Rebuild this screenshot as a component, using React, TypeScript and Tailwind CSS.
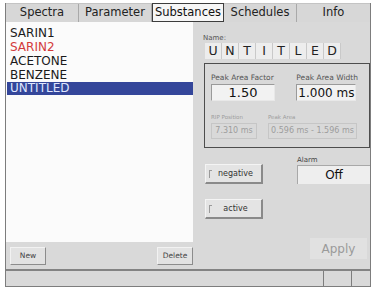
import React from 'react';

const tabs = ['Spectra', 'Parameter', 'Substances', 'Schedules', 'Info'];
const items = [
  { name: 'SARIN1', color: 'text-[#1a1a1a]' },
  { name: 'SARIN2', color: 'text-[#d33a3a]' },
  { name: 'ACETONE', color: 'text-[#1a1a1a]' },
  { name: 'BENZENE', color: 'text-[#1a1a1a]' },
];
const letters = ['U', 'N', 'T', 'I', 'T', 'L', 'E', 'D'];

function Toggle({ label }: { label: string }) {
  return (
    <div className="w-[58px] h-[20px] flex items-center bg-[#e4e4e4] border-t border-l border-[#f4f4f4] border-r-2 border-b-2 border-r-[#8a8a8a] border-b-[#8a8a8a]">
      <span className="ml-[3px] w-[3px] h-[8px] border-l border-t border-[#9a9a9a]" />
      <span className="flex-1 text-center text-[8px] text-[#333] pr-[2px]">{label}</span>
    </div>
  );
}

export default function App() {
  return (
    <div
      className="w-[377px] h-[293px] bg-white overflow-hidden pt-[3px] pl-[5px]"
      style={{ fontFamily: '"DejaVu Sans", "Liberation Sans", sans-serif' }}
    >
      <div className="w-[366px] h-[284px] flex flex-col bg-[#d9d9d9] border-l border-r border-b border-[#7d7d7d]">
        {/* Tab bar */}
        <div className="h-[19px] flex bg-[#d7d7d7] border-t border-[#c4c4c4]">
          {tabs.map((t, i) =>
            t === 'Substances' ? (
              <div
                key={t}
                className="w-[72px] h-[19px] -mt-[1px] flex items-center justify-center bg-[#f6f6f6] border-[1.5px] border-[#3d3d3d] text-[11.5px] text-[#111]"
              >
                {t}
              </div>
            ) : (
              <div
                key={t}
                className={`${i === 4 ? 'flex-1' : 'w-[73px]'} flex items-center justify-center text-[11.5px] text-[#222] ${i < 4 ? 'border-r border-[#a9a9a9]' : ''}`}
              >
                {t}
              </div>
            )
          )}
        </div>

        {/* Content */}
        <div className="flex-1 flex min-h-0">
          {/* Left list column */}
          <div className="w-[187px] flex flex-col">
            <div className="h-[220px] bg-[#fbfbfb] pt-[4px] pl-[1px]">
              {items.map((it) => (
                <div key={it.name} className={`h-[14px] leading-[14px] pl-[3px] text-[12px] ${it.color}`}>
                  {it.name}
                </div>
              ))}
              <div className="h-[13px] leading-[13px] pl-[3px] text-[12px] bg-[#34469a] text-[#dfe6ff]">
                UNTITLED
              </div>
            </div>
            <div className="flex-1 flex items-center justify-between pl-[4px]">
              <div className="w-[36px] h-[18px] flex items-center justify-center text-[7.5px] text-[#444] bg-[#e2e2e2] border-t border-l border-[#f2f2f2] border-r border-b border-r-[#8c8c8c] border-b-[#8c8c8c]">
                New
              </div>
              <div className="w-[36px] h-[18px] flex items-center justify-center text-[7.5px] text-[#444] bg-[#e2e2e2] border-t border-l border-[#f2f2f2] border-r border-b border-r-[#8c8c8c] border-b-[#8c8c8c]">
                Delete
              </div>
            </div>
          </div>

          {/* Right panel */}
          <div className="flex-1 flex flex-col pl-[10px]">
            <div className="mt-[12px] text-[7px] leading-[8px] text-[#555]">Name:</div>
            <div className="mt-[1px] ml-[2px] flex">
              {letters.map((l, i) => (
                <div
                  key={i}
                  className="w-[17px] h-[16px] flex items-center justify-center text-[12.5px] text-[#222] bg-[#ededed] border-r border-[#c9c9c9]"
                >
                  {l}
                </div>
              ))}
            </div>

            {/* Peak group box */}
            <div className="mt-[4px] ml-[1px] h-[85px] border border-[#4d4d4d] flex flex-col px-[6px] pt-[9px]">
              <div className="flex justify-between">
                <div className="flex flex-col">
                  <span className="text-[7.5px] leading-[9px] text-[#555] whitespace-nowrap">Peak Area Factor</span>
                  <div className="mt-[2px] w-[64px] h-[17px] flex items-center justify-center text-[13px] text-[#111] bg-[#f2f2f2] border-t border-l border-[#9a9a9a] border-r border-b border-r-[#e8e8e8] border-b-[#e8e8e8]">
                    1.50
                  </div>
                </div>
                <div className="flex flex-col mr-[5px]">
                  <span className="text-[7.5px] leading-[9px] text-[#555] whitespace-nowrap">Peak Area Width</span>
                  <div className="mt-[2px] w-[60px] h-[17px] flex items-center justify-center text-[12px] text-[#111] whitespace-nowrap bg-[#f2f2f2] border-t border-l border-[#9a9a9a] border-r border-b border-r-[#e8e8e8] border-b-[#e8e8e8]">
                    1.000 ms
                  </div>
                </div>
              </div>
              <div className="flex mt-[13px]">
                <div className="flex flex-col">
                  <span className="text-[5.5px] leading-[7px] text-[#9d9d9d]">RIP Position</span>
                  <div className="mt-[2px] w-[46px] h-[16px] flex items-center justify-center text-[8px] text-[#9d9d9d] border border-[#c6c6c6]">
                    7.310 ms
                  </div>
                </div>
                <div className="flex flex-col ml-[11px]">
                  <span className="text-[5.5px] leading-[7px] text-[#9d9d9d]">Peak Area</span>
                  <div className="mt-[2px] w-[89px] h-[16px] flex items-center justify-center text-[8px] text-[#9d9d9d] whitespace-nowrap border border-[#c6c6c6]">
                    0.596 ms - 1.596 ms
                  </div>
                </div>
              </div>
            </div>

            <div className="flex justify-between mt-[8px]">
              <div className="mt-[8px] ml-[2px]">
                <Toggle label="negative" />
              </div>
              <div className="flex flex-col w-[73px]">
                <span className="text-[7px] leading-[9px] text-[#444]">Alarm</span>
                <div className="h-[19px] flex items-center justify-center text-[12px] font-medium text-[#111] bg-[#eeeeee] border-l border-t border-[#a8a8a8]">
                  Off
                </div>
              </div>
            </div>

            <div className="mt-[15px] ml-[2px]">
              <Toggle label="active" />
            </div>

            <div className="mt-auto mb-[10px] mr-[3px] self-end w-[57px] h-[21px] flex items-center justify-center text-[12px] text-[#9a9a9a] bg-[#e1e1e1]">
              Apply
            </div>
          </div>
        </div>

        {/* Status bar */}
        <div className="h-[17px] flex bg-[#d9d9d9] border-t-2 border-[#838383]">
          <div className="w-[318px] border-r border-[#7d7d7d]" />
          <div className="w-[28px] border-r border-[#7d7d7d]" />
          <div className="flex-1" />
        </div>
      </div>
    </div>
  );
}
